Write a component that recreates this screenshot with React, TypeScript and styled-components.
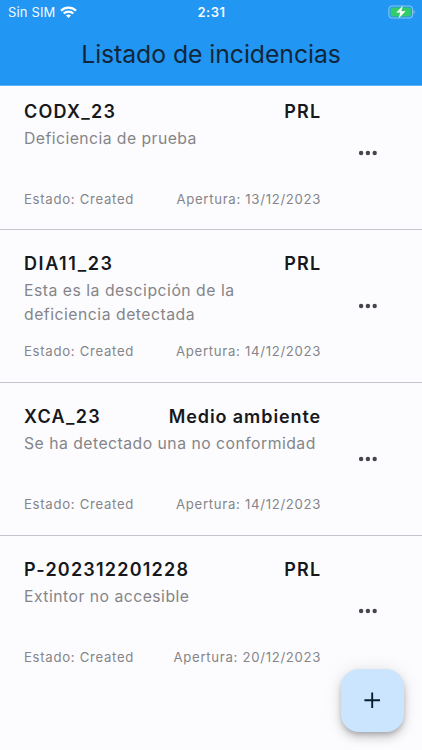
import React from "react";
import styled, { createGlobalStyle } from "styled-components";

const GlobalStyle = createGlobalStyle`
  * { box-sizing: border-box; }
  body { margin: 0; background: #fcfcff; font-family: Inter, "Liberation Sans", sans-serif; }
`;

const Screen = styled.main`
  position: relative;
  width: 422px;
  height: 750px;
  overflow: hidden;
  background: #fcfcff;
`;

const Header = styled.header`
  height: 85.5px;
  background: #2196f3;
  border-bottom: 1px solid #62b3f6;
`;

const StatusBar = styled.div`
  display: grid;
  grid-template-columns: 1fr auto 1fr;
  align-items: center;
  height: 24px;
  padding: 0 7px 0 8px;
  color: #f4faff;
  font-size: 13px;
  line-height: 24px;
`;

const Carrier = styled.div`
  display: flex;
  align-items: center;
  gap: 5px;
  letter-spacing: 0.15px;
`;

const Clock = styled.div`
  font-weight: 600;
  font-size: 13px;
  letter-spacing: 0.5px;
`;

const Power = styled.div`
  display: flex;
  justify-content: flex-end;
`;

const Heading = styled.h1`
  margin: 0;
  height: 61px;
  text-align: center;
  color: #12263a;
  font-size: 24.75px;
  font-weight: 400;
  line-height: 61px;
  letter-spacing: -0.05px;
`;

const List = styled.ul`
  margin: 0;
  padding: 0;
  list-style: none;
`;

const Row = styled.li<{ $last: boolean }>`
  display: flex;
  align-items: center;
  height: 152.8px;
  padding: 0 44px 0 24px;
  position: relative;
  &::after {
    content: "";
    display: ${(p) => (p.$last ? "none" : "block")};
    position: absolute;
    left: 0;
    right: 0;
    bottom: 8px;
    height: 1px;
    background: #c3c6cd;
  }
`;

const Details = styled.div`
  display: flex;
  flex-direction: column;
  width: 297.2px;
  height: 100%;
  padding-top: 13px;
`;

const Line = styled.div`
  display: flex;
  justify-content: space-between;
  white-space: nowrap;
`;

const Code = styled.span<{ $spacing: number }>`
  color: #17181b;
  font-size: 18px;
  font-weight: 600;
  line-height: 26px;
  letter-spacing: ${(p) => p.$spacing}px;
`;

const Description = styled.p<{ $spacing: number }>`
  margin: 2px 0 0;
  height: 60px;
  color: #858588;
  font-size: 15.75px;
  line-height: 23.6px;
  letter-spacing: ${(p) => p.$spacing}px;
  white-space: pre;
`;

const Meta = styled.span`
  color: #858588;
  font-size: 13.2px;
  line-height: 24px;
  letter-spacing: 0.69px;
`;

const MoreButton = styled.button`
  display: flex;
  margin: 0 0 17.6px auto;
  padding: 0;
  border: 0;
  background: none;
`;

const AddButton = styled.button`
  position: absolute;
  left: 341px;
  top: 669px;
  display: flex;
  align-items: center;
  justify-content: center;
  width: 63px;
  height: 63px;
  padding: 0;
  border: 0;
  border-radius: 18px;
  background: #cce5ff;
  box-shadow: 0 3px 5px -1px rgba(0, 0, 0, 0.2), 0 6px 10px rgba(0, 0, 0, 0.14),
    0 1px 18px rgba(0, 0, 0, 0.1);
`;

const WifiIcon = () => (
  <svg width="17" height="13" viewBox="0 0 17 13" fill="none" stroke="#fff" strokeWidth="2.3">
    <path d="M1 4.6C5.2 .55 11.8 .55 16 4.6" />
    <path d="M3.7 7.5C6.4 4.9 10.6 4.9 13.3 7.5" />
    <path d="M6 9.5C7.4 8.2 9.6 8.2 11 9.5L8.5 12.1Z" fill="#fff" stroke="none" />
  </svg>
);

const BatteryIcon = () => (
  <svg width="27" height="15" viewBox="0 0 27 15">
    <rect x=".9" y="1" width="23.6" height="12" rx="3.4" fill="none" stroke="#89c4f5" strokeWidth="1.1" />
    <rect x="2.6" y="2.5" width="20.2" height="9" rx="2" fill="#32cd69" />
    <path d="M25.6 5c1.5.6 1.5 3.4 0 4z" fill="#89c4f5" />
    <path d="M15.2.3 7.9 7.7h4.2L10.4 13.8l7.5-7.7h-4.4z" fill="#fff" stroke="#32cd69" strokeWidth=".3" />
  </svg>
);

const MoreIcon = () => (
  <svg width="20" height="6" viewBox="0 0 20 6" fill="#43474c">
    <circle cx="3.1" cy="3" r="2.2" />
    <circle cx="9.9" cy="3" r="2.2" />
    <circle cx="16.7" cy="3" r="2.2" />
  </svg>
);

const PlusIcon = () => (
  <svg width="17" height="17" viewBox="0 0 17 17" stroke="#071e30" strokeWidth="1.9">
    <path d="M8.2 .4v15.6M.4 8.2h15.6" />
  </svg>
);

const incidents = [
  { code: "CODX_23", codeSpacing: 1.25, kind: "PRL", kindSpacing: 1.1, text: "Deficiencia de prueba", textSpacing: 0.44, opened: "13/12/2023" },
  { code: "DIA11_23", codeSpacing: 1.6, kind: "PRL", kindSpacing: 1.1, text: "Esta es la descipción de la\ndeficiencia detectada", textSpacing: 0.51, opened: "14/12/2023" },
  { code: "XCA_23", codeSpacing: 1.3, kind: "Medio ambiente", kindSpacing: 0.92, text: "Se ha detectado una no conformidad", textSpacing: 0.48, opened: "14/12/2023" },
  { code: "P-202312201228", codeSpacing: 1.21, kind: "PRL", kindSpacing: 1.1, text: "Extintor no accesible", textSpacing: 0.48, opened: "20/12/2023" },
];

export default function App() {
  return (
    <Screen>
      <GlobalStyle />
      <Header>
        <StatusBar>
          <Carrier>Sin SIM <WifiIcon /></Carrier>
          <Clock>2:31</Clock>
          <Power><BatteryIcon /></Power>
        </StatusBar>
        <Heading>Listado de incidencias</Heading>
      </Header>
      <List>
        {incidents.map((item, i) => (
          <Row key={item.code} $last={i === incidents.length - 1}>
            <Details>
              <Line>
                <Code $spacing={item.codeSpacing}>{item.code}</Code>
                <Code $spacing={item.kindSpacing}>{item.kind}</Code>
              </Line>
              <Description $spacing={item.textSpacing}>{item.text}</Description>
              <Line>
                <Meta>Estado: Created</Meta>
                <Meta>Apertura: {item.opened}</Meta>
              </Line>
            </Details>
            <MoreButton aria-label="Más opciones"><MoreIcon /></MoreButton>
          </Row>
        ))}
      </List>
      <AddButton aria-label="Añadir incidencia"><PlusIcon /></AddButton>
    </Screen>
  );
}
